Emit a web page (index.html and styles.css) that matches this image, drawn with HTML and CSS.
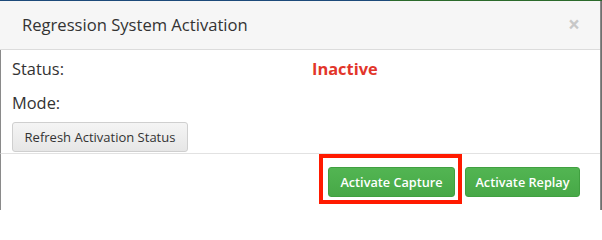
FILE: index.html
```html
<!DOCTYPE html>
<html>
<head>
<meta charset="utf-8">
<link rel="stylesheet" href="styles.css">
</head>
<body>
<div class="topstrip"></div>
<div class="modal">
  <div class="modal-header">
    <h4 class="title">Regression System Activation</h4>
    <span class="close">×</span>
  </div>
  <div class="modal-body">
    <div class="row">
      <span class="label">Status:</span>
      <span class="value inactive">Inactive</span>
    </div>
    <div class="row">
      <span class="label">Mode:</span>
      <span class="value"></span>
    </div>
    <button class="btn btn-default">Refresh Activation Status</button>
  </div>
  <div class="modal-footer">
    <button class="btn btn-success highlighted">Activate Capture</button>
    <button class="btn btn-success">Activate Replay</button>
  </div>
</div>
</body>
</html>
```

FILE: styles.css
```css
html {
  background: #fff;
}
html, body {
  margin: 0;
  padding: 0;
}
body {
  width: 602px;
  height: 210px;
  overflow: hidden;
  background: #6f6f6f;
  font-family: "Open Sans", "Liberation Sans", sans-serif;
  color: #333;
}
.topstrip {
  height: 1px;
  background: linear-gradient(to right, #1d4a7a 0, #1d4a7a 390px, #2b6a2b 390px, #2b6a2b 100%);
}
.modal {
  width: 600px;
  height: 209px;
  background: #fff;
  border-right: 1px solid #8a8a8a;
  display: flex;
  flex-direction: column;
}
.modal-header {
  height: 48px;
  background: #f6f6f6;
  border-bottom: 1px solid #dcdcdc;
  display: flex;
  align-items: center;
  justify-content: space-between;
  padding: 0 20px 0 22px;
}
.title {
  margin: 0;
  font-size: 16.6px;
  font-weight: 400;
  color: #333;
  line-height: 24px;
}
.close {
  font-size: 21px;
  font-weight: 700;
  color: #c8c8c8;
  line-height: 1;
  margin-top: -1px;
}
.modal-body {
  border-left: 1px solid #8a8a8a;
  padding: 8px 11px 1px 11px;
  display: flex;
  flex-direction: column;
  align-items: flex-start;
}
.row {
  display: grid;
  grid-template-columns: 300px 1fr;
  font-size: 16.4px;
  line-height: 22px;
  height: 22px;
  width: 100%;
}
.row + .row {
  margin-top: 12px;
}
.inactive {
  color: #e2352a;
  font-weight: 700;
}
.btn {
  font-family: "Open Sans", "Liberation Sans", sans-serif;
  font-size: 13px;
  line-height: 18px;
  padding: 5px 0;
  border-radius: 3px;
  height: 30px;
  box-sizing: border-box;
  white-space: nowrap;
  text-align: center;
  cursor: pointer;
}
.btn-default {
  margin-top: 8px;
  width: 176px;
  color: #333;
  background: linear-gradient(#f4f4f4, #e6e6e6);
  border: 1px solid #cfcfcf;
}
.modal-footer {
  flex: 1;
  border-top: 1px solid #e2e2e2;
  border-left: 1px solid #8a8a8a;
  display: flex;
  justify-content: flex-end;
  align-items: flex-start;
  gap: 10px;
  padding: 13px 20px 0 0;
}
.btn-success {
  color: #fff;
  font-size: 12.7px;
  font-weight: 600;
  background: linear-gradient(#52b552, #47a847);
  border: 1px solid #40a040;
}
.highlighted {
  position: relative;
  width: 127px;
}
.highlighted::after {
  content: "";
  position: absolute;
  left: -10px;
  right: -8px;
  top: -14px;
  bottom: -8px;
  border: 4px solid #ff1a00;
  pointer-events: none;
}
.modal-footer .btn-success:last-child {
  width: 115px;
}
```
